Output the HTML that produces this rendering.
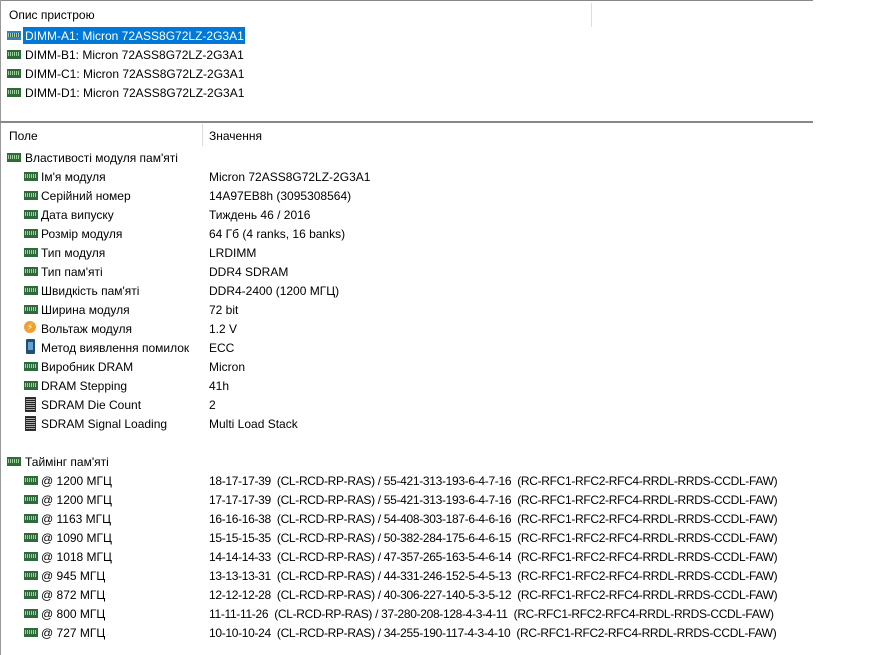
<!DOCTYPE html>
<html><head><meta charset="utf-8"><style>
body{margin:0;width:896px;height:655px;background:#fff;position:relative;overflow:hidden;font-family:"Liberation Sans","DejaVu Sans",sans-serif;font-size:12px;color:#000}
.a{position:absolute;white-space:nowrap;line-height:15px;margin-top:1px}
.t{letter-spacing:-0.32px}
.r{position:absolute;width:14px;height:9px;background:#2f6b3a;box-sizing:border-box}
.r::after{content:"";position:absolute;left:1px;right:1px;top:2px;height:4px;background:repeating-linear-gradient(90deg,#9fcf9f 0 1px,#2f6b3a 1px 2px)}
.c{position:absolute;width:11px;height:15px;background:repeating-linear-gradient(0deg,#222 0 1px,#aaa 1px 2px);border:1px solid #333;box-sizing:border-box}
</style></head><body>
<div style="position:absolute;left:0;top:0;width:813px;height:1px;background:#888"></div>
<div style="position:absolute;left:0;top:0;width:1px;height:655px;background:#999"></div>
<div style="position:absolute;left:591px;top:3px;width:1px;height:24px;background:#ddd"></div>
<div style="position:absolute;left:0;top:121px;width:813px;height:2px;background:#888"></div>
<div style="position:absolute;left:202px;top:124px;width:1px;height:22px;background:#ddd"></div>
<div class="a" style="left:9px;top:7px">Опис пристрою</div>
<div style="position:absolute;left:23px;top:27px;width:222px;height:17px;background:#0078d7"></div>
<div class="r" style="left:7px;top:31px;background:#3c7fc0"></div>
<div class="a" style="left:25px;top:28px;color:#fff">DIMM-A1: Micron 72ASS8G72LZ-2G3A1</div>
<div class="r" style="left:7px;top:50px"></div><div class="a" style="left:25px;top:47px">DIMM-B1: Micron 72ASS8G72LZ-2G3A1</div>
<div class="r" style="left:7px;top:69px"></div><div class="a" style="left:25px;top:66px">DIMM-C1: Micron 72ASS8G72LZ-2G3A1</div>
<div class="r" style="left:7px;top:88px"></div><div class="a" style="left:25px;top:85px">DIMM-D1: Micron 72ASS8G72LZ-2G3A1</div>
<div class="a" style="left:9px;top:128px">Поле</div>
<div class="a" style="left:209px;top:128px">Значення</div>

<div class="r" style="left:7px;top:153px"></div><div class="a" style="left:25px;top:150px">Властивості модуля пам'яті</div>

<div class="r" style="left:24px;top:172px"></div><div class="a" style="left:41px;top:169px">Ім'я модуля</div><div class="a" style="left:209px;top:169px">Micron 72ASS8G72LZ-2G3A1</div>
<div class="r" style="left:24px;top:191px"></div><div class="a" style="left:41px;top:188px">Серійний номер</div><div class="a" style="left:209px;top:188px">14A97EB8h (3095308564)</div>
<div class="r" style="left:24px;top:210px"></div><div class="a" style="left:41px;top:207px">Дата випуску</div><div class="a" style="left:209px;top:207px">Тиждень 46 / 2016</div>
<div class="r" style="left:24px;top:229px"></div><div class="a" style="left:41px;top:226px">Розмір модуля</div><div class="a" style="left:209px;top:226px">64 Гб (4 ranks, 16 banks)</div>
<div class="r" style="left:24px;top:248px"></div><div class="a" style="left:41px;top:245px">Тип модуля</div><div class="a" style="left:209px;top:245px">LRDIMM</div>
<div class="r" style="left:24px;top:267px"></div><div class="a" style="left:41px;top:264px">Тип пам'яті</div><div class="a" style="left:209px;top:264px">DDR4 SDRAM</div>
<div class="r" style="left:24px;top:286px"></div><div class="a" style="left:41px;top:283px">Швидкість пам'яті</div><div class="a" style="left:209px;top:283px">DDR4-2400 (1200 МГЦ)</div>
<div class="r" style="left:24px;top:305px"></div><div class="a" style="left:41px;top:302px">Ширина модуля</div><div class="a" style="left:209px;top:302px">72 bit</div>
<div style="position:absolute;left:24px;top:321px;width:12px;height:12px;border-radius:50%;background:#f0a030;color:#fff;font-size:9px;line-height:12px;text-align:center">⚡</div><div class="a" style="left:41px;top:321px">Вольтаж модуля</div><div class="a" style="left:209px;top:321px">1.2 V</div>
<div style="position:absolute;left:26px;top:339px;width:9px;height:15px;background:#1e4f7a;border-radius:1px"><div style="margin:3px 2px;height:8px;background:#6aa0d0"></div></div><div class="a" style="left:41px;top:340px">Метод виявлення помилок</div><div class="a" style="left:209px;top:340px">ECC</div>
<div class="r" style="left:24px;top:362px"></div><div class="a" style="left:41px;top:359px">Виробник DRAM</div><div class="a" style="left:209px;top:359px">Micron</div>
<div class="r" style="left:24px;top:381px"></div><div class="a" style="left:41px;top:378px">DRAM Stepping</div><div class="a" style="left:209px;top:378px">41h</div>
<div class="c" style="left:25px;top:397px"></div><div class="a" style="left:41px;top:397px">SDRAM Die Count</div><div class="a" style="left:209px;top:397px">2</div>
<div class="c" style="left:25px;top:416px"></div><div class="a" style="left:41px;top:416px">SDRAM Signal Loading</div><div class="a" style="left:209px;top:416px">Multi Load Stack</div>

<div class="r" style="left:7px;top:457px"></div><div class="a" style="left:25px;top:454px">Таймінг пам'яті</div>
<div class="r" style="left:24px;top:476px"></div><div class="a" style="left:41px;top:473px">@ 1200 МГЦ</div><div class="a t" style="left:209px;top:473px">18-17-17-39 &nbsp;(CL-RCD-RP-RAS) / 55-421-313-193-6-4-7-16 &nbsp;(RC-RFC1-RFC2-RFC4-RRDL-RRDS-CCDL-FAW)</div>
<div class="r" style="left:24px;top:495px"></div><div class="a" style="left:41px;top:492px">@ 1200 МГЦ</div><div class="a t" style="left:209px;top:492px">17-17-17-39 &nbsp;(CL-RCD-RP-RAS) / 55-421-313-193-6-4-7-16 &nbsp;(RC-RFC1-RFC2-RFC4-RRDL-RRDS-CCDL-FAW)</div>
<div class="r" style="left:24px;top:514px"></div><div class="a" style="left:41px;top:511px">@ 1163 МГЦ</div><div class="a t" style="left:209px;top:511px">16-16-16-38 &nbsp;(CL-RCD-RP-RAS) / 54-408-303-187-6-4-6-16 &nbsp;(RC-RFC1-RFC2-RFC4-RRDL-RRDS-CCDL-FAW)</div>
<div class="r" style="left:24px;top:533px"></div><div class="a" style="left:41px;top:530px">@ 1090 МГЦ</div><div class="a t" style="left:209px;top:530px">15-15-15-35 &nbsp;(CL-RCD-RP-RAS) / 50-382-284-175-6-4-6-15 &nbsp;(RC-RFC1-RFC2-RFC4-RRDL-RRDS-CCDL-FAW)</div>
<div class="r" style="left:24px;top:552px"></div><div class="a" style="left:41px;top:549px">@ 1018 МГЦ</div><div class="a t" style="left:209px;top:549px">14-14-14-33 &nbsp;(CL-RCD-RP-RAS) / 47-357-265-163-5-4-6-14 &nbsp;(RC-RFC1-RFC2-RFC4-RRDL-RRDS-CCDL-FAW)</div>
<div class="r" style="left:24px;top:571px"></div><div class="a" style="left:41px;top:568px">@ 945 МГЦ</div><div class="a t" style="left:209px;top:568px">13-13-13-31 &nbsp;(CL-RCD-RP-RAS) / 44-331-246-152-5-4-5-13 &nbsp;(RC-RFC1-RFC2-RFC4-RRDL-RRDS-CCDL-FAW)</div>
<div class="r" style="left:24px;top:590px"></div><div class="a" style="left:41px;top:587px">@ 872 МГЦ</div><div class="a t" style="left:209px;top:587px">12-12-12-28 &nbsp;(CL-RCD-RP-RAS) / 40-306-227-140-5-3-5-12 &nbsp;(RC-RFC1-RFC2-RFC4-RRDL-RRDS-CCDL-FAW)</div>
<div class="r" style="left:24px;top:609px"></div><div class="a" style="left:41px;top:606px">@ 800 МГЦ</div><div class="a t" style="left:209px;top:606px">11-11-11-26 &nbsp;(CL-RCD-RP-RAS) / 37-280-208-128-4-3-4-11 &nbsp;(RC-RFC1-RFC2-RFC4-RRDL-RRDS-CCDL-FAW)</div>
<div class="r" style="left:24px;top:628px"></div><div class="a" style="left:41px;top:625px">@ 727 МГЦ</div><div class="a t" style="left:209px;top:625px">10-10-10-24 &nbsp;(CL-RCD-RP-RAS) / 34-255-190-117-4-3-4-10 &nbsp;(RC-RFC1-RFC2-RFC4-RRDL-RRDS-CCDL-FAW)</div>
</body></html>
